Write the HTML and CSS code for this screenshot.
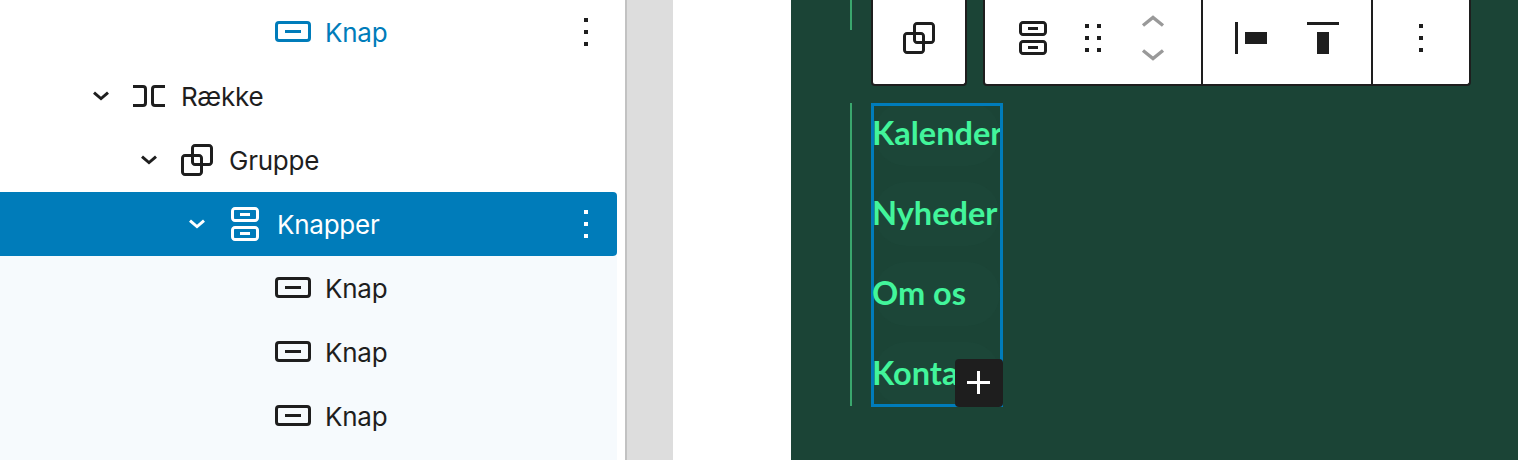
FILE: index.html
```html
<!DOCTYPE html>
<html lang="da">
<head>
<meta charset="utf-8">
<title>Knapper</title>
<link rel="stylesheet" href="styles.css">
</head>
<body>
<svg class="defs" aria-hidden="true">
  <symbol id="i-chev" viewBox="0 0 24 24"><path d="m15.99 10.889-3.988 3.418-3.988-3.418.976-1.14 3.012 2.582 3.012-2.581.976 1.139Z"/></symbol>
  <symbol id="i-more" viewBox="0 0 24 24"><path d="M13 19h-2v-2h2v2zm0-6h-2v-2h2v2zm0-6h-2V5h2v2z"/></symbol>
  <symbol id="i-drag" viewBox="0 0 24 24"><path d="M8 7h2V5H8v2zm0 6h2v-2H8v2zm0 6h2v-2H8v2zm6-14v2h2V5h-2zm0 8h2v-2h-2v2zm0 6h2v-2h-2v2z"/></symbol>
  <symbol id="i-button" viewBox="0 0 24 24"><path d="M8 12.5h8V11H8v1.5Z"/><path fill-rule="evenodd" d="M19 6.5H5a2 2 0 0 0-2 2V15a2 2 0 0 0 2 2h14a2 2 0 0 0 2-2V8.5a2 2 0 0 0-2-2ZM5 8h14a.5.5 0 0 1 .5.5V15a.5.5 0 0 1-.5.5H5a.5.5 0 0 1-.5-.5V8.5A.5.5 0 0 1 5 8Z"/></symbol>
  <symbol id="i-buttons" viewBox="0 0 24 24"><path d="M14.5 17.5H9.5V16H14.5V17.5Z"/><path d="M14.5 8H9.5V6.5H14.5V8Z"/><path fill-rule="evenodd" d="M7 3.5H17C18.1046 3.5 19 4.39543 19 5.5V9C19 10.1046 18.1046 11 17 11H7C5.89543 11 5 10.1046 5 9V5.5C5 4.39543 5.89543 3.5 7 3.5ZM17 5H7C6.72386 5 6.5 5.22386 6.5 5.5V9C6.5 9.27614 6.72386 9.5 7 9.5H17C17.2761 9.5 17.5 9.27614 17.5 9V5.5C17.5 5.22386 17.2761 5 17 5Z"/><path fill-rule="evenodd" d="M7 13H17C18.1046 13 19 13.8954 19 15V18.5C19 19.6046 18.1046 20.5 17 20.5H7C5.89543 20.5 5 19.6046 5 18.5V15C5 13.8954 5.89543 13 7 13ZM17 14.5H7C6.72386 14.5 6.5 14.7239 6.5 15V18.5C6.5 18.7761 6.72386 19 7 19H17C17.2761 19 17.5 18.7761 17.5 18.5V15C17.5 14.7239 17.2761 14.5 17 14.5Z"/></symbol>
  <symbol id="i-group" viewBox="0 0 24 24"><path d="M18 4h-7c-1.1 0-2 .9-2 2v3H6c-1.1 0-2 .9-2 2v7c0 1.1.9 2 2 2h7c1.1 0 2-.9 2-2v-3h3c1.1 0 2-.9 2-2V6c0-1.1-.9-2-2-2zm-4.500 14c0 .3-.2.5-.5.5H6c-.3 0-.5-.2-.5-.5v-7c0-.3.2-.5.5-.5h3V13c0 1.100.9 2 2 2h2.500v3zm0-4.500H11c-.3 0-.5-.2-.5-.5v-2.500H13c.3 0 .5.2.5.5v2.500zm5-.5c0 .3-.2.5-.5.5h-3V11c0-1.100-.9-2-2-2h-2.500V6c0-.3.2-.5.5-.5h7c.3 0 .5.2.5.5v7z"/></symbol>
  <symbol id="i-row" viewBox="0 0 24 24"><path d="M4 6.500h5a2 2 0 0 1 2 2v7a2 2 0 0 1-2 2H4V16h5a.5.5 0 0 0 .5-.5v-7A.5.5 0 0 0 9 8H4V6.500Zm16 0h-5a2 2 0 0 0-2 2v7a2 2 0 0 0 2 2h5V16h-5a.5.5 0 0 1-.5-.5v-7A.5.5 0 0 1 15 8h5V6.500Z"/></symbol>
</svg>

<div class="app">
  <aside class="sidebar">
    <ul class="tree">
      <li class="row d3 accent">
        <svg class="ico"><use href="#i-button"/></svg><span class="label">Knap</span>
        <svg class="ico more dark"><use href="#i-more"/></svg>
      </li>
      <li class="row d0">
        <svg class="ico"><use href="#i-chev"/></svg><svg class="ico"><use href="#i-row"/></svg><span class="label">Række</span>
      </li>
      <li class="row d1">
        <svg class="ico"><use href="#i-chev"/></svg><svg class="ico"><use href="#i-group"/></svg><span class="label">Gruppe</span>
      </li>
      <li class="row d2 selected">
        <svg class="ico"><use href="#i-chev"/></svg><svg class="ico"><use href="#i-buttons"/></svg><span class="label">Knapper</span>
        <svg class="ico more"><use href="#i-more"/></svg>
      </li>
      <li class="row d3">
        <svg class="ico"><use href="#i-button"/></svg><span class="label">Knap</span>
      </li>
      <li class="row d3">
        <svg class="ico"><use href="#i-button"/></svg><span class="label">Knap</span>
      </li>
      <li class="row d3">
        <svg class="ico"><use href="#i-button"/></svg><span class="label">Knap</span>
      </li>
    </ul>
  </aside>
  <div class="gutter"></div>
  <div class="margin-strip"></div>
  <main class="panel">
    <div class="tool-row">
      <span class="rule rule-short"></span>
      <div class="toolbar">
        <div class="tgroup">
          <div class="seg seg-single"><svg class="ico"><use href="#i-group"/></svg></div>
        </div>
        <div class="tgroup">
          <div class="seg seg-tight">
            <svg class="ico"><use href="#i-buttons"/></svg>
            <svg class="ico"><use href="#i-drag"/></svg>
            <svg class="ico mover" viewBox="0 0 48 48"><path d="M14 11.500 24 3.500l10 8"/><path d="M14 36.500 24 44.500l10-8"/></svg>
          </div>
          <div class="seg seg-wide">
            <svg class="ico" viewBox="0 0 48 48"><path d="M8 8h3v32H8zM18 18h22v12H18z"/></svg>
            <svg class="ico" viewBox="0 0 48 48"><path d="M8 8h32v3H8zM18 18h12v22H18z"/></svg>
          </div>
          <div class="seg"><svg class="ico"><use href="#i-more"/></svg></div>
        </div>
      </div>
      <span class="tick"></span>
    </div>
    <div class="nav-row">
      <span class="rule rule-long"></span>
      <nav class="nav">
        <div class="nav-list">
          <a class="nav-btn"><span class="nav-text">Kalender</span></a>
          <a class="nav-btn"><span class="nav-text">Nyheder</span></a>
          <a class="nav-btn"><span class="nav-text">Om os</span></a>
          <a class="nav-btn"><span class="nav-text">Kontakt</span></a>
        </div>
        <span class="adder"><svg class="ico" viewBox="0 0 48 48"><path d="M25 12h-3v10H12v3h10v10h3V25h10v-3H25z"/></svg></span>
      </nav>
    </div>
  </main>
</div>
</body>
</html>
```
FILE: styles.css
```css
* { box-sizing: border-box; }
html, body { margin: 0; height: 100%; overflow: hidden; background: #fff; }
body { font-family: Inter, "Liberation Sans", sans-serif; color: #1e1e1e; }
.defs { position: absolute; width: 0; height: 0; }

.app { display: flex; height: 460px; }

.sidebar { width: 627px; flex: none; border-right: 2px solid #c2c2c2; background: #fff; padding-right: 8px; }
.tree { list-style: none; margin: 0; padding: 0; height: 100%; background: linear-gradient(#fff 256px, #f6fafd 256px); }
.row { display: flex; align-items: center; height: 64px; font-size: 26px; letter-spacing: -.25px; }
.d0 { padding-left: 77px; }
.d1 { padding-left: 125px; }
.d2 { padding-left: 173px; }
.d3 { padding-left: 269px; }
.ico { width: 48px; height: 48px; flex: none; fill: currentColor; display: block; }
.label { margin-left: 8px; }
.more { margin-left: auto; margin-right: 7px; }
.dark { color: #1e1e1e; }
.accent { color: #007cba; }
.selected { background: #007cba; color: #fff; border-radius: 0 4px 4px 0; }

.gutter { width: 46px; flex: none; background: #ddd; }
.margin-strip { width: 118px; flex: none; background: #fff; }

.panel { flex: 1; background: #1b4436; padding-left: 59px; }
.tool-row { position: relative; display: flex; align-items: flex-start; gap: 19px; height: 86px; }
.rule { display: block; flex: none; width: 2px; background: #3aa76d; }
.rule-short { height: 30px; }
.rule-long { height: 303px; }
.tick { position: absolute; left: 189px; top: 0; width: 3px; height: 6px; background: #fff; }

.toolbar { display: flex; gap: 16px; height: 86px; }
.tgroup { display: flex; height: 86px; background: #fff; border: 2px solid #1e1e1e; border-top: 0; border-radius: 0 0 4px 4px; }
.seg { display: flex; padding: 14px 24px 0; height: 84px; }
.seg + .seg { border-left: 2px solid #1e1e1e; }
.seg-single { padding: 14px 22px 0; }
.seg-tight { gap: 12px; }
.seg-wide { gap: 24px; }
.mover { fill: none; stroke: #999; stroke-width: 3.4; }

.nav-row { display: flex; align-items: flex-start; gap: 19px; margin-top: 17px; }
.nav { position: relative; width: 132px; height: 304px; border: 3px solid #007cba; }
.nav-list { display: flex; flex-direction: column; gap: 16px; height: 100%; clip-path: inset(0 0 0 -4px); }
.nav-btn { display: flex; align-items: center; flex: none; height: 64px; padding-bottom: 4px; background: #1c4638; border-radius: 32px; }
.nav-btn:first-child { margin-top: -4px; }
.nav-text { margin-left: -2px; color: #42f59b; font-family: Lato, "Noto Sans", sans-serif; font-weight: 700; font-size: 32.5px; white-space: nowrap; }
.adder { position: absolute; right: -3px; bottom: -3px; width: 48px; height: 48px; background: #1e1e1e; color: #fff; border-radius: 4px; }
```
